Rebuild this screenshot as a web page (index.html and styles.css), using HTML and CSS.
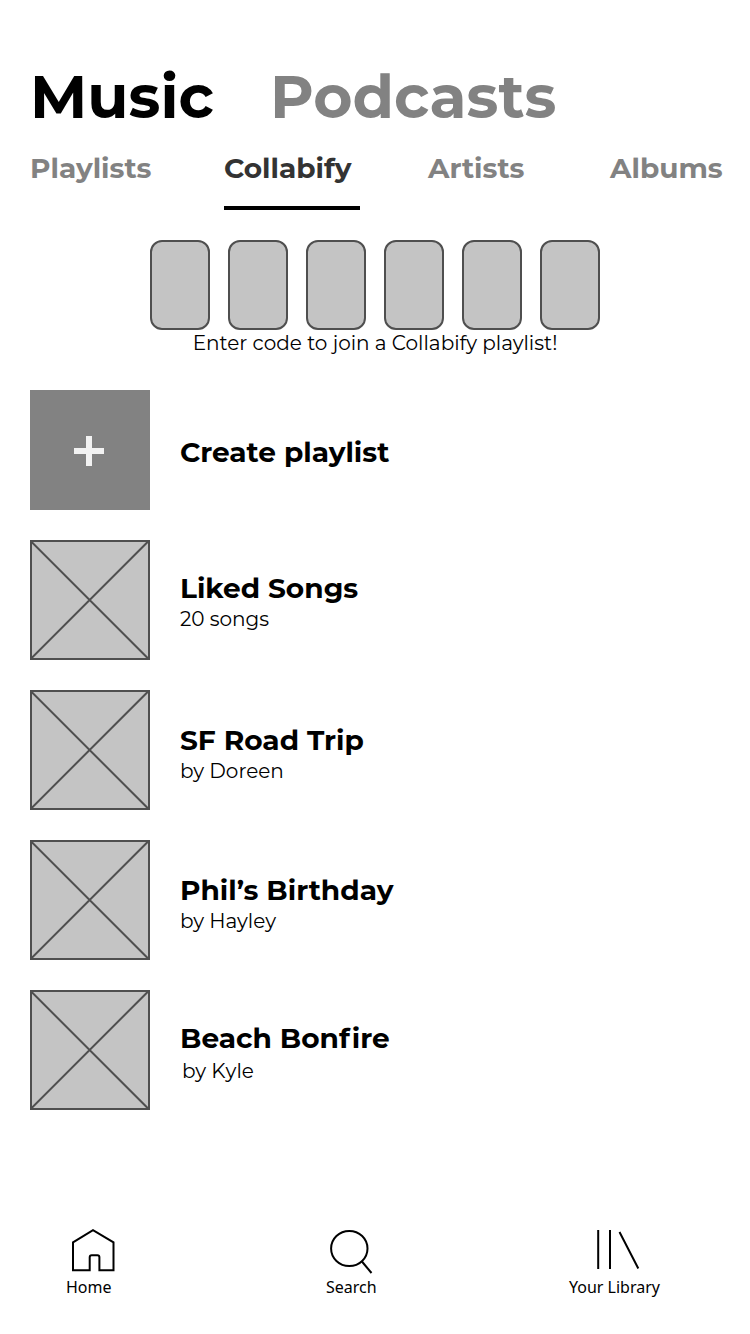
FILE: index.html
```html
<!DOCTYPE html>
<html lang="en">
<head>
<meta charset="utf-8">
<title>Your Library</title>
<link rel="stylesheet" href="styles.css">
</head>
<body>
<main class="screen">
  <header class="sections">
    <h1 class="section section-music">Music</h1>
    <h1 class="section section-podcasts">Podcasts</h1>
  </header>
  <nav class="tabs">
    <a class="tab">Playlists</a>
    <a class="tab tab-active">Collabify</a>
    <a class="tab">Artists</a>
    <a class="tab">Albums</a>
  </nav>
  <section class="join">
    <div class="code"><i class="digit"></i><i class="digit"></i><i class="digit"></i><i class="digit"></i><i class="digit"></i><i class="digit"></i></div>
    <p class="hint">Enter code to join a Collabify playlist!</p>
  </section>
  <ul class="playlists">
    <li class="row row-create">
      <svg class="cover" viewBox="0 0 120 120"><path class="create-bg" d="M0 0h120v120H0z"/><path class="plus" d="M56 46h6v12h12v6H62v12h-6V64H44v-6h12z"/></svg>
      <div class="info"><h2 class="title">Create playlist</h2></div>
    </li>
    <li class="row row-liked">
      <svg class="cover" viewBox="0 0 120 120"><path class="placeholder" d="M1 1h118v118H1zM.6 1l118 118M118.600 1l-118 118"/></svg>
      <div class="info"><h2 class="title">Liked Songs</h2><p class="sub">20 songs</p></div>
    </li>
    <li class="row row-trip">
      <svg class="cover" viewBox="0 0 120 120"><path class="placeholder" d="M1 1h118v118H1zM.6 1l118 118M118.600 1l-118 118"/></svg>
      <div class="info"><h2 class="title">SF Road Trip</h2><p class="sub">by Doreen</p></div>
    </li>
    <li class="row row-birthday">
      <svg class="cover" viewBox="0 0 120 120"><path class="placeholder" d="M1 1h118v118H1zM.6 1l118 118M118.600 1l-118 118"/></svg>
      <div class="info"><h2 class="title">Phil’s Birthday</h2><p class="sub">by Hayley</p></div>
    </li>
    <li class="row row-bonfire">
      <svg class="cover" viewBox="0 0 120 120"><path class="placeholder" d="M1 1h118v118H1zM.6 1l118 118M118.600 1l-118 118"/></svg>
      <div class="info"><h2 class="title">Beach Bon<span class="wide-f">f</span>ire</h2><p class="sub">by Kyle</p></div>
    </li>
  </ul>
  <footer class="bottom-nav">
    <a class="nav-item nav-home"><svg class="nav-icon" viewBox="0 0 50 50"><path d="M7 17.400L27 5.100l20.500 12.300V45.300H33.400V32.300q0-2-2-2h-5.700q-2 0-2 2v13H7z"/></svg><span>Home</span></a>
    <a class="nav-item nav-search"><svg class="nav-icon" viewBox="0 0 50 50"><ellipse cx="23.300" cy="23.500" rx="18.200" ry="17.600"/><path d="M35.500 36l10 12"/></svg><span>Search</span></a>
    <a class="nav-item nav-library"><svg class="nav-icon" viewBox="0 0 50 50"><path d="M8.200 5v39M20 5v39M29.500 7l18.800 36.500"/></svg><span>Your Library</span></a>
  </footer>
</main>
</body>
</html>
```

FILE: styles.css
```css
* { box-sizing: border-box; margin: 0; padding: 0; }
body { width: 750px; height: 1334px; overflow: hidden; background: #fff; color: #000; font-family: Montserrat, Inter, sans-serif; }
.screen { display: flex; flex-direction: column; width: 750px; height: 1334px; padding: 60px 0 0; }
.sections { display: flex; height: 74px; padding-left: 30px; }
.section { font-size: 60px; line-height: 74px; font-weight: 700; white-space: nowrap; }
.section-music { width: 240px; }
.section-podcasts { color: #828282; }
.tabs { display: grid; grid-template-columns: 194px 204px 182px auto; height: 76px; padding: 16px 0 0 30px; }
.tab { height: 60px; font-size: 28px; line-height: 36px; font-weight: 700; color: #828282; white-space: nowrap; }
.tab-active { width: 136px; color: #333; border-bottom: 4px solid #000; }
.join { display: flex; flex-direction: column; align-items: center; height: 180px; padding-top: 30px; }
.code { display: flex; gap: 18px; }
.digit { width: 60px; height: 90px; border: 2px solid #4f4f4f; border-radius: 12px; background: #c4c4c4; }
.hint { font-size: 20px; line-height: 26px; font-weight: 400; white-space: nowrap; }
.playlists { display: flex; flex-direction: column; gap: 30px; padding-left: 30px; list-style: none; }
.row { display: flex; gap: 30px; height: 120px; }
.cover { width: 120px; height: 120px; }
.create-bg { fill: #828282; }
.plus { fill: #f2f2f2; }
.placeholder { fill: #c4c4c4; stroke: #4f4f4f; stroke-width: 2; }
.info { padding-top: 31px; }
.row-create .info { padding-top: 45px; }
.row-trip .info, .row-birthday .info { padding-top: 33px; }
.title { font-size: 28px; line-height: 34px; font-weight: 700; font-variant-ligatures: none; white-space: nowrap; }
.wide-f { letter-spacing: 2px; }
.sub { font-size: 20px; line-height: 28px; font-weight: 400; white-space: nowrap; }
.row-bonfire .sub { padding: 2px 0 0 2px; }
.bottom-nav { display: flex; padding: 115px 0 0 66px; font-family: "Noto Sans", sans-serif; }
.nav-item { display: flex; flex-direction: column; font-size: 16px; line-height: 24px; white-space: nowrap; }
.nav-home { width: 260px; }
.nav-search { width: 243px; }
.nav-icon { width: 50px; height: 50px; fill: none; stroke: #000; stroke-width: 2; }
.nav-library .nav-icon { margin-left: 21px; }
```
